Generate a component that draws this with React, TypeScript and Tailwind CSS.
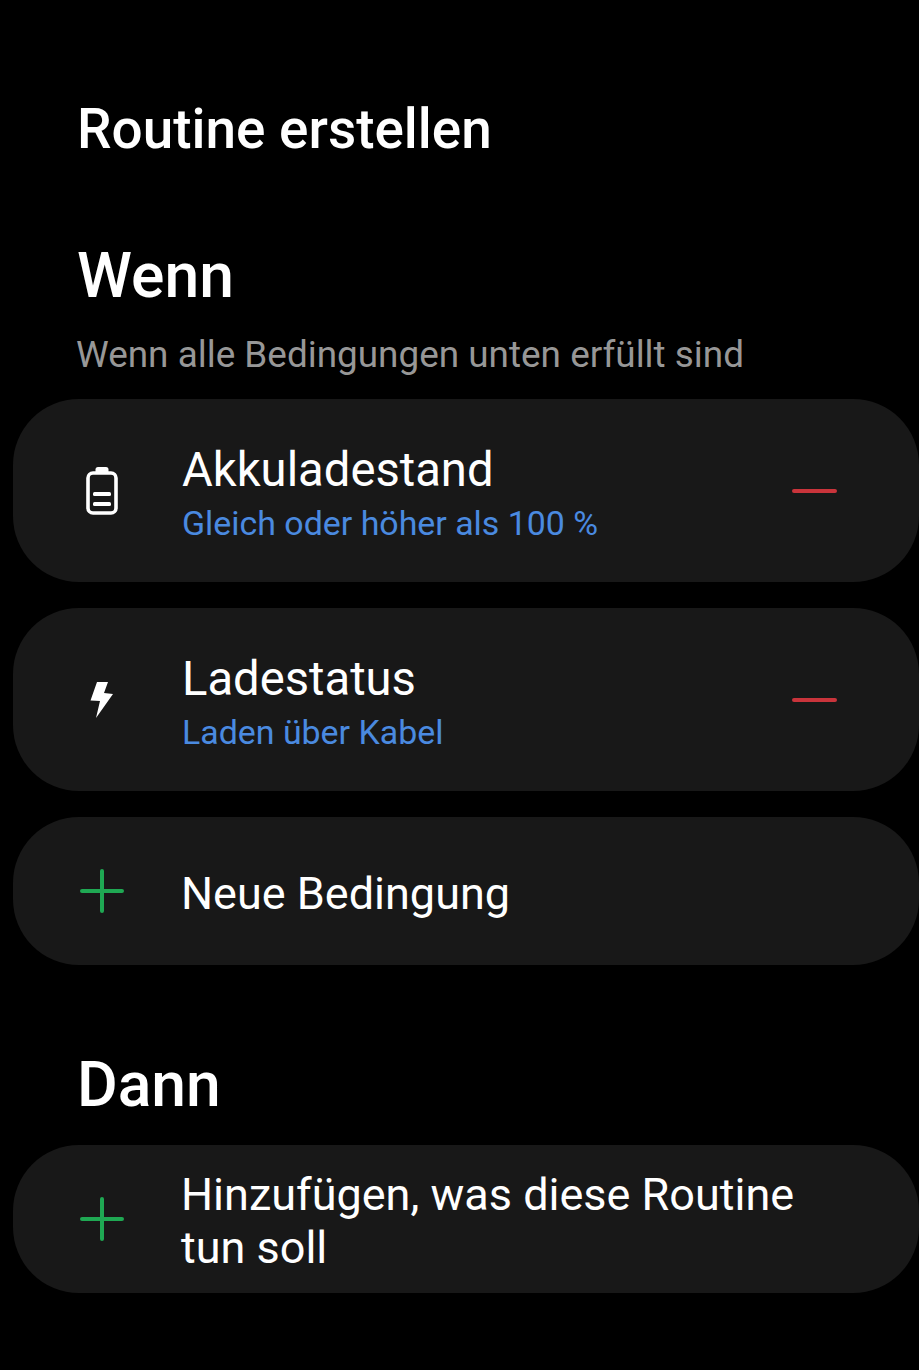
const Battery = () => (
  <svg width="34" height="50" viewBox="0 0 34 50" fill="none" className="block">
    <path d="M10.5 3.5 Q10.5 1 13 1 H21 Q23.5 1 23.5 3.5 V6 H10.5 Z" fill="#fff" />
    <rect x="3" y="7" width="28" height="40" rx="5" stroke="#fff" strokeWidth="3.6" />
    <rect x="8" y="26" width="18" height="4" rx="1.5" fill="#fff" />
    <rect x="8" y="36" width="18" height="4" rx="1.5" fill="#fff" />
  </svg>
);

const Bolt = () => (
  <svg width="24" height="38" viewBox="0 0 24 38" className="ml-[1px] block">
    <polygon points="7,1 18,1 14,12 23,13 6,37 10,20 0.5,19.5" fill="#fff" />
  </svg>
);

const Plus = () => (
  <svg width="44" height="44" viewBox="0 0 44 44" className="block">
    <path d="M22 2 V42 M2 22 H42" stroke="#1fa853" strokeWidth="4" strokeLinecap="round" />
  </svg>
);

const Minus = () => <div className="h-1 w-[45px] rounded-full bg-[#c9343b]" />;

function Row({ icon, title, sub, removable }: { icon: React.ReactNode; title: string; sub?: string; removable?: boolean }) {
  return (
    <div className={`flex items-center rounded-[66px] bg-[#181818] ${sub ? "h-[183px]" : "h-[148px]"}`}>
      <div className="flex w-[169px] shrink-0 justify-center pl-[9px] pr-[1px]">{icon}</div>
      {sub ? (
        <div className="min-w-0 flex-1 pt-[9px]">
          <div className="text-[47.2px] leading-[53px] text-white">{title}</div>
          <div className="mt-[4px] text-[33.9px] leading-[45px] text-[#4a8ae0]">{sub}</div>
        </div>
      ) : (
        <div className="-ml-[1px] min-w-0 max-w-[640px] flex-1 pt-[4px] text-[45px] leading-[53px] text-white">{title}</div>
      )}
      {removable && <div className="mr-[82px] shrink-0"><Minus /></div>}
    </div>
  );
}

export default function App() {
  return (
    <div className="h-[1370px] w-full overflow-hidden bg-black pl-[13px] pt-[97px] font-['Roboto',sans-serif]">
      <h1 className="pl-[64px] text-[54.9px] font-medium leading-[64px] text-white">Routine erstellen</h1>
      <h2 className="mt-[79px] pl-[64px] text-[62.4px] font-medium leading-[72px] text-white">Wenn</h2>
      <p className="mt-[21px] pl-[63px] text-[36.9px] leading-[44px] text-[#979797]">Wenn alle Bedingungen unten erfüllt sind</p>
      <div className="mt-[22px] flex flex-col gap-[26px]">
        <Row removable icon={<Battery />} title="Akkuladestand" sub="Gleich oder höher als 100 %" />
        <Row removable icon={<Bolt />} title="Ladestatus" sub="Laden über Kabel" />
        <Row icon={<Plus />} title="Neue Bedingung" />
      </div>
      <h2 className="mt-[84px] pl-[64px] text-[62.4px] font-medium leading-[72px] text-white">Dann</h2>
      <div className="mt-[24px]">
        <Row icon={<Plus />} title="Hinzufügen, was diese Routine tun soll" />
      </div>
    </div>
  );
}
